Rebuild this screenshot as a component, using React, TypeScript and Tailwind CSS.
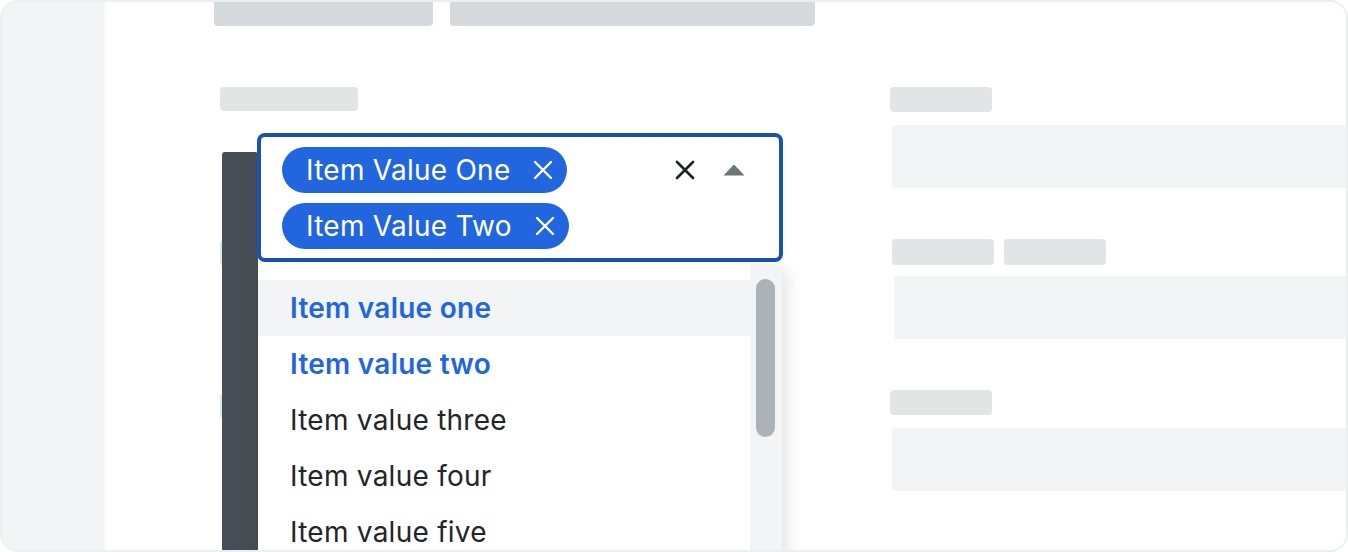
import React from "react";

const options = [
  { label: "Item value one", selected: true, active: true },
  { label: "Item value two", selected: true, active: false },
  { label: "Item value three", selected: false, active: false },
  { label: "Item value four", selected: false, active: false },
  { label: "Item value five", selected: false, active: false },
];

function Chip({ label }: { label: string }) {
  return (
    <div className="flex h-[46px] items-center rounded-full bg-[#2166de] pl-[24px] pr-[14px] text-white">
      <span className="text-[28px] leading-none tracking-[0.25px]">{label}</span>
      <svg className="ml-[23px]" width="20" height="20" viewBox="0 0 20 20">
        <path d="M2 2 L18 18 M18 2 L2 18" stroke="white" strokeWidth="2.4" strokeLinecap="round" />
      </svg>
    </div>
  );
}

function MultiSelect() {
  return (
    <div className="flex w-[526px] flex-col gap-[2px]">
      <div className="flex rounded-[8px] border-4 border-[#1b50b4] bg-white pb-[9px] pl-[21px] pr-[34px] pt-[10px]">
        <div className="flex flex-1 flex-col items-start gap-[10px]">
          <Chip label="Item Value One" />
          <Chip label="Item Value Two" />
        </div>
        <div className="flex h-[46px] items-center gap-[28px]">
          <svg width="20" height="20" viewBox="0 0 20 20">
            <path d="M2 2 L18 18 M18 2 L2 18" stroke="#1f2224" strokeWidth="2.6" strokeLinecap="round" />
          </svg>
          <svg width="22" height="12" viewBox="0 0 22 12">
            <path d="M11 0.5 L21.5 11.5 L0.5 11.5 Z" fill="#6c757a" />
          </svg>
        </div>
      </div>
      <div className="ml-[1px] flex h-[300px] w-[524px] overflow-hidden rounded-t-[6px] bg-white shadow-[6px_6px_16px_rgba(0,0,0,0.10)]">
        <ul className="flex-1 pt-[16px]">
          {options.map((o) => (
            <li
              key={o.label}
              className={
                "flex h-[56px] items-center pl-[32px] text-[28px] tracking-[0.25px] " +
                (o.active ? "bg-[#f3f4f6] " : "") +
                (o.selected ? "font-semibold text-[#2166de]" : "text-[#232628]")
              }
            >
              {o.label}
            </li>
          ))}
        </ul>
        <div className="w-[32px] bg-[#f3f4f6] pl-[6px] pt-[15px]">
          <div className="h-[158px] w-[19px] rounded-full bg-[#abb3b8]" />
        </div>
      </div>
    </div>
  );
}

export default function App() {
  return (
    <div className="h-[552px] w-[1348px] bg-white font-['Inter',sans-serif]">
      <div className="flex h-full overflow-hidden rounded-[18px] border-2 border-[#eceef0]">
        <aside className="z-10 w-[101px] shrink-0 bg-[#f3f4f6] shadow-[1px_0_4px_rgba(0,0,0,0.07)]" />
        <main className="flex flex-1 flex-col bg-white">
          <div className="flex gap-[17px] pl-[111px]">
            <div className="h-[24px] w-[219px] rounded-b-[4px] bg-[#d7dadd]" />
            <div className="h-[24px] w-[365px] rounded-b-[4px] bg-[#d7dadd]" />
          </div>

          <div className="mt-[61px] flex flex-1">
            {/* left column */}
            <div className="relative ml-[117px] w-[670px] shrink-0">
              <div className="h-[24px] w-[138px] rounded-[4px] bg-[#e2e5e6]" />
              <div className="mt-[129px] h-[26px] w-[30px] rounded-[4px] bg-[#e2e5e6]" />
              <div className="mt-[127px] h-[26px] w-[30px] rounded-[4px] bg-[#e2e5e6]" />
              <div className="absolute left-[2px] top-[65px] h-[420px] w-[36px] rounded-t-[3px] bg-gradient-to-r from-[#474f56] to-[#464d51]" />
              <div className="absolute left-[37px] top-[46px] z-20">
                <MultiSelect />
              </div>
            </div>

            {/* right column */}
            <div className="mr-[-12px] flex flex-1 flex-col">
              <div className="h-[25px] w-[102px] rounded-[4px] bg-[#e2e5e6]" />
              <div className="ml-[2px] mt-[13px] h-[63px] rounded-[4px] bg-[#f3f4f6]" />
              <div className="ml-[2px] mt-[51px] flex gap-[10px]">
                <div className="h-[26px] w-[102px] rounded-[4px] bg-[#e2e5e6]" />
                <div className="h-[26px] w-[102px] rounded-[4px] bg-[#e2e5e6]" />
              </div>
              <div className="ml-[4px] mt-[11px] h-[63px] rounded-[4px] bg-[#f3f4f6]" />
              <div className="mt-[51px] h-[25px] w-[102px] rounded-[4px] bg-[#e2e5e6]" />
              <div className="ml-[2px] mt-[13px] h-[63px] rounded-[4px] bg-[#f3f4f6]" />
            </div>
          </div>
        </main>
      </div>
    </div>
  );
}
